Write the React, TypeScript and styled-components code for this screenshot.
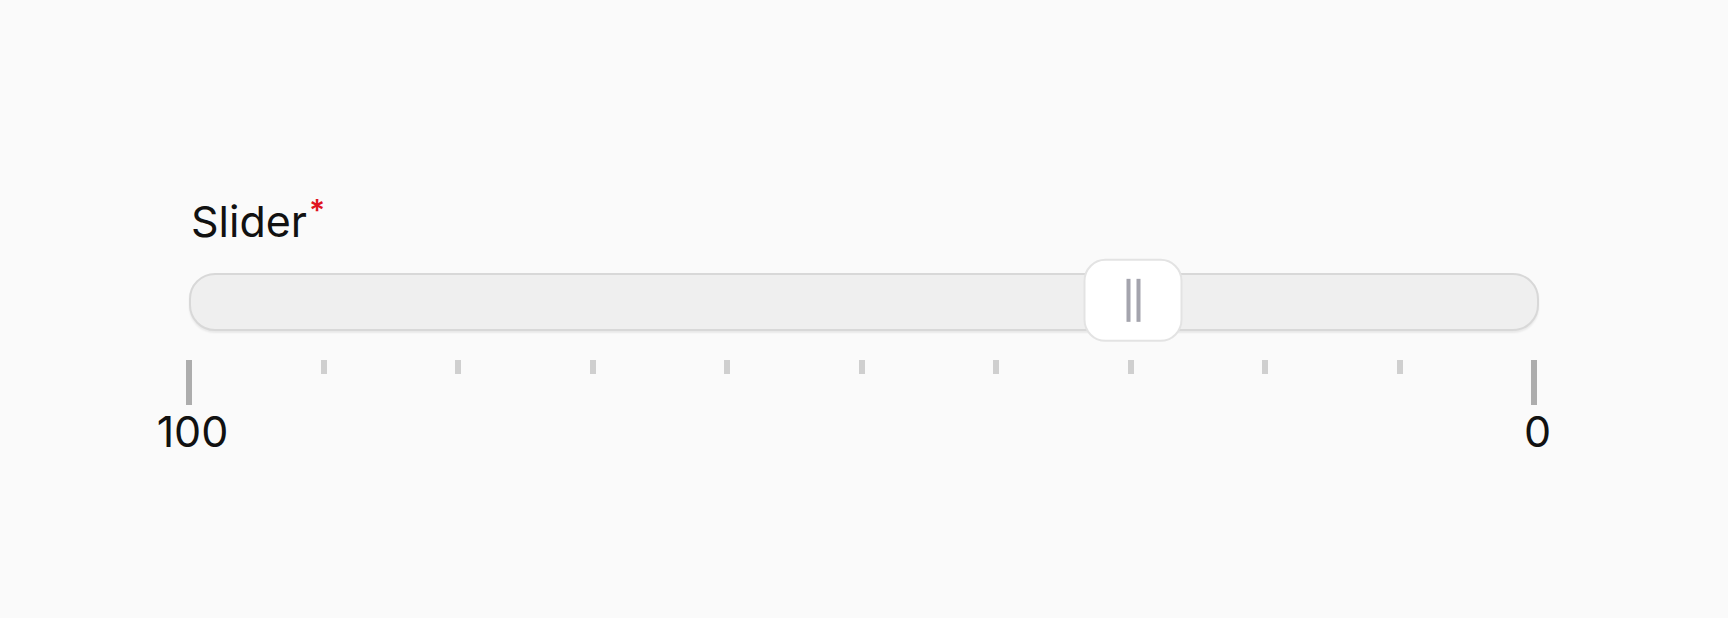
import styled, { createGlobalStyle } from 'styled-components';

const GlobalStyle = createGlobalStyle`
  html, body {
    margin: 0;
    padding: 0;
    background: #fafafa;
    font-family: Inter, 'Noto Sans', sans-serif;
    color: #111;
  }
`;

const Page = styled.div`
  min-height: 618px;
  padding-top: 195px;
  box-sizing: border-box;
`;

const Field = styled.div`
  width: 1350px;
  margin: 0 auto;
  display: flex;
  flex-direction: column;
`;

const Label = styled.label`
  font-size: 43px;
  line-height: 52px;
  font-weight: 400;
  margin-bottom: 26px;
  padding-left: 2px;
`;

const Required = styled.span`
  position: relative;
  top: -16px;
  font-size: 30px;
  font-weight: 600;
  line-height: 1;
  color: #e0141e;
  margin-left: 2px;
`;

const Track = styled.div`
  position: relative;
  height: 58px;
  box-sizing: border-box;
  border: 2px solid #d8d8d8;
  border-radius: 26px;
  background: #efefef;
  box-shadow: 0 2px 2px rgba(0, 0, 0, 0.07);
`;

const Thumb = styled.div`
  position: absolute;
  top: 50%;
  width: 99px;
  height: 83px;
  box-sizing: border-box;
  transform: translate(-50%, -52%);
  background: #fff;
  border: 2px solid #e3e3e3;
  border-radius: 22px;
  display: flex;
  align-items: center;
  justify-content: center;
  gap: 6px;
`;

const Grip = styled.span`
  width: 4px;
  height: 43px;
  background: #a4a4ad;
`;

const Scale = styled.div`
  display: flex;
  justify-content: space-between;
  margin: 29px 5px 0 0;
`;

const TickSlot = styled.div`
  width: 0;
  display: flex;
  flex-direction: column;
  align-items: center;
`;

const Tick = styled.span<{ $major?: boolean }>`
  flex: none;
  width: 6px;
  height: ${({ $major }) => ($major ? '45px' : '14px')};
  background: ${({ $major }) => ($major ? '#adadad' : '#cfcfcf')};
`;

const TickLabel = styled.span`
  font-size: 43px;
  line-height: 52px;
  padding-left: 7px;
  white-space: nowrap;
`;

const MAX = 100;
const MIN = 0;
const STEPS = 10;
const value = 30;

export default function App() {
  // slider runs from max on the left down to min on the right
  const percent = ((MAX - value) / (MAX - MIN)) * 100;
  const ticks = Array.from({ length: STEPS + 1 }, (_, i) => i);

  return (
    <Page>
      <GlobalStyle />
      <Field>
        <Label>
          Slider<Required>*</Required>
        </Label>
        <Track>
          <Thumb style={{ left: `${percent}%` }}>
            <Grip />
            <Grip />
          </Thumb>
        </Track>
        <Scale>
          {ticks.map((i) => {
            const major = i === 0 || i === STEPS;
            return (
              <TickSlot key={i}>
                <Tick $major={major} />
                {major && <TickLabel>{i === 0 ? MAX : MIN}</TickLabel>}
              </TickSlot>
            );
          })}
        </Scale>
      </Field>
    </Page>
  );
}
